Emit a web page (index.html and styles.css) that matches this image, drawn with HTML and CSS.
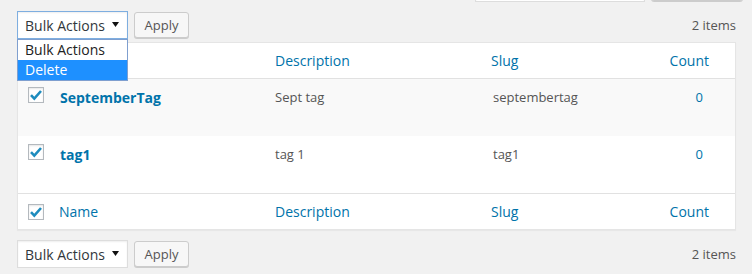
FILE: index.html
```html
<!DOCTYPE html>
<html>
<head>
<meta charset="utf-8">
<link rel="stylesheet" href="styles.css">
</head>
<body>
<div class="wrap">
  <div class="search-row">
    <div class="search-input"></div>
    <div class="search-btn"></div>
  </div>

  <div class="tablenav top">
    <div class="select-wrap">
      <div class="select focused">
        <span>Bulk Actions</span>
        <svg class="arrow" width="7" height="5" viewBox="0 0 7 5"><path d="M0 0H7L3.5 5Z" fill="#111"/></svg>
      </div>
      <ul class="dropdown">
        <li>Bulk Actions</li>
        <li class="selected">Delete</li>
      </ul>
    </div>
    <button class="btn">Apply</button>
    <div class="count">2 items</div>
  </div>

  <div class="table">
    <div class="row head">
      <div class="c cb"><span class="check"><svg width="14" height="14" viewBox="0 0 14 14"><path d="M2 7.2L5.3 10.6L12 3" fill="none" stroke="#1e8cbe" stroke-width="2.6"/></svg></span></div>
      <div class="c name hd covered">Name</div>
      <div class="c desc hd">Description</div>
      <div class="c slug hd">Slug</div>
      <div class="c posts hd">Count</div>
    </div>
    <div class="row body alt">
      <div class="c cb"><span class="check"><svg width="14" height="14" viewBox="0 0 14 14"><path d="M2 7.2L5.3 10.6L12 3" fill="none" stroke="#1e8cbe" stroke-width="2.6"/></svg></span></div>
      <div class="c name"><a class="title">SeptemberTag</a></div>
      <div class="c desc">Sept tag</div>
      <div class="c slug">septembertag</div>
      <div class="c posts num">0</div>
    </div>
    <div class="row body">
      <div class="c cb"><span class="check"><svg width="14" height="14" viewBox="0 0 14 14"><path d="M2 7.2L5.3 10.6L12 3" fill="none" stroke="#1e8cbe" stroke-width="2.6"/></svg></span></div>
      <div class="c name"><a class="title">tag1</a></div>
      <div class="c desc">tag 1</div>
      <div class="c slug">tag1</div>
      <div class="c posts num">0</div>
    </div>
    <div class="row foot">
      <div class="c cb"><span class="check"><svg width="14" height="14" viewBox="0 0 14 14"><path d="M2 7.2L5.3 10.6L12 3" fill="none" stroke="#1e8cbe" stroke-width="2.6"/></svg></span></div>
      <div class="c name hd">Name</div>
      <div class="c desc hd">Description</div>
      <div class="c slug hd">Slug</div>
      <div class="c posts hd">Count</div>
    </div>
  </div>

  <div class="tablenav bottom">
    <div class="select-wrap">
      <div class="select">
        <span>Bulk Actions</span>
        <svg class="arrow" width="7" height="5" viewBox="0 0 7 5"><path d="M0 0H7L3.5 5Z" fill="#111"/></svg>
      </div>
    </div>
    <button class="btn">Apply</button>
    <div class="count">2 items</div>
  </div>
</div>
</body>
</html>
```

FILE: styles.css
```css
html, body {
  margin: 0;
  padding: 0;
  background: #f1f1f1;
  font-family: "Open Sans", "Liberation Sans", sans-serif;
  color: #444;
  overflow: hidden;
}

.wrap {
  padding: 0 16px 0 17px;
}

.search-row {
  display: flex;
  justify-content: flex-end;
  gap: 6px;
  margin-top: -26px;
  margin-right: -7px;
  height: 28px;
}

.search-input {
  width: 168px;
  height: 26px;
  background: #fff;
  border: 1px solid #ddd;
  box-shadow: inset 0 1px 2px rgba(0,0,0,.07);
}

.search-btn {
  width: 90px;
  height: 25px;
  background: #f7f7f7;
  border: 1px solid #ccc;
  border-radius: 3px;
  box-shadow: 0 1px 0 #ccc;
}

.tablenav {
  display: flex;
  align-items: center;
  height: 28px;
}

.tablenav.top {
  margin-top: 9px;
}

.tablenav.bottom {
  margin-top: 10px;
}

.select-wrap {
  position: relative;
}

.select {
  box-sizing: border-box;
  width: 111px;
  height: 28px;
  background: #fff;
  border: 1px solid #ddd;
  box-shadow: inset 0 1px 2px rgba(0,0,0,.07);
  display: flex;
  align-items: center;
  justify-content: space-between;
  padding: 0 8px 0 7px;
  font-size: 14px;
  color: #32373c;
}

.select.focused {
  border-color: #7eaee0;
}

.arrow {
  display: block;
  margin-top: -1px;
}

.dropdown {
  position: absolute;
  left: 0;
  top: 28px;
  box-sizing: border-box;
  width: 111px;
  margin: 0;
  padding: 0;
  list-style: none;
  background: #fff;
  border: 1px solid #7f9fcf;
  z-index: 5;
}

.dropdown li {
  height: 20px;
  line-height: 20px;
  padding-left: 7px;
  font-size: 14px;
  color: #222;
}

.dropdown li.selected {
  background: #1e90ff;
  color: #fff;
}

.btn {
  box-sizing: border-box;
  margin-left: 6px;
  width: 55px;
  height: 26px;
  padding: 0;
  background: #f7f7f7;
  border: 1px solid #ccc;
  border-radius: 3px;
  box-shadow: 0 1px 0 #ccc;
  font-family: "Open Sans", "Liberation Sans", sans-serif;
  font-size: 13px;
  color: #555;
}

.count {
  margin-left: auto;
  font-size: 13px;
  color: #555;
}

.table {
  margin-top: 3px;
  background: #fff;
  border: 1px solid #e5e5e5;
  box-shadow: 0 1px 1px rgba(0,0,0,.04);
}

.row {
  display: grid;
  grid-template-columns: 32px 215px 216px 150px 1fr;
}

.row.head {
  height: 35px;
  border-bottom: 1px solid #e1e1e1;
  align-items: center;
}

.row.foot {
  height: 35px;
  border-top: 1px solid #e1e1e1;
  align-items: center;
}

.row.body {
  height: 57px;
  align-items: start;
}

.row.alt {
  background: #f9f9f9;
}

.c {
  padding-left: 10px;
  font-size: 13px;
  color: #555;
}

.row.body .c {
  padding-top: 8px;
  line-height: 21px;
}

.hd {
  font-size: 14px;
  color: #0073aa;
}

.covered {
  visibility: hidden;
}

.foot .name {
  padding-left: 9px;
}

.cb {
  padding-left: 10px;
  display: flex;
  align-items: center;
}

.row.body .cb {
  padding-top: 8px;
}

.check {
  box-sizing: border-box;
  width: 16px;
  height: 16px;
  border: 1px solid #b4b9be;
  background: #fff;
  box-shadow: inset 0 1px 2px rgba(0,0,0,.1);
  display: flex;
  align-items: center;
  justify-content: center;
}

.check svg {
  display: block;
}

.title {
  font-size: 14px;
  font-weight: 700;
  color: #0073aa;
}

.posts {
  text-align: right;
  padding-right: 26px;
}

.posts.num {
  padding-right: 32px;
  color: #0073aa;
}

.slug {
  padding-left: 10px;
}

.row.body .slug {
  padding-left: 12px;
}
```
